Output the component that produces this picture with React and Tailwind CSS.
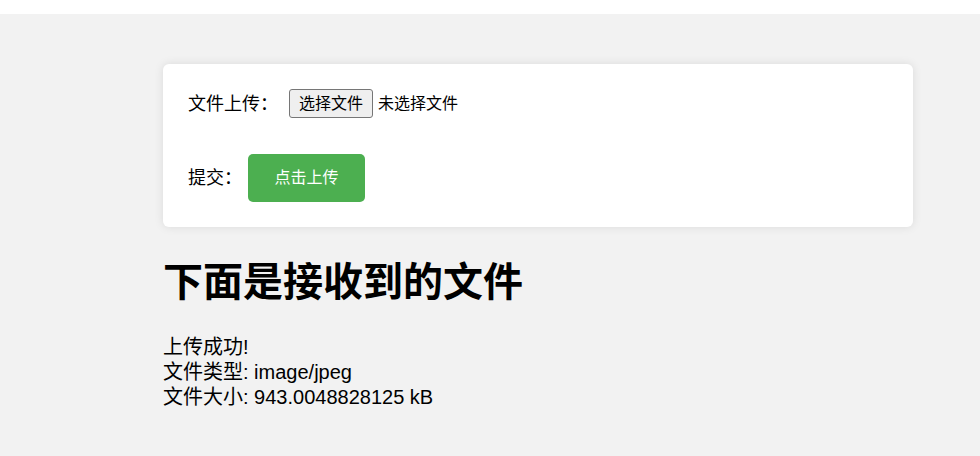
export default function App() {
  return (
    <div
      className="min-h-[456px] bg-[#f2f2f2] text-black"
      style={{ fontFamily: '"Liberation Sans", "Noto Sans CJK SC", sans-serif' }}
    >
      {/* top strip */}
      <div className="h-[14px] bg-white" />

      <div className="ml-[163px] w-[750px] pt-[50px]">
        {/* upload card */}
        <div className="bg-white rounded-[6px] shadow-[0_0_10px_rgba(0,0,0,0.1)] px-[25px] py-[25px]">
          <div className="flex items-center h-[29px]">
            <span className="text-[18px] leading-none">文件上传：</span>
            <button className="ml-[11px] h-[29px] px-[9px] text-[16px] leading-none bg-[#efefef] border border-[#767676] rounded-[3px]">
              选择文件
            </button>
            <span className="ml-[5px] text-[16px] leading-none">未选择文件</span>
          </div>
          <div className="flex items-center mt-[36px] h-[48px]">
            <span className="text-[18px] leading-none">提交：</span>
            <button className="ml-[6px] h-[48px] w-[117px] bg-[#4caf50] text-white text-[16px] rounded-[5px]">
              点击上传
            </button>
          </div>
        </div>

        {/* result */}
        <h1 className="mt-[31px] text-[40px] leading-[48px] font-bold">下面是接收到的文件</h1>
        <div className="mt-[29px] text-[20px] leading-[25px]">
          <div>上传成功!</div>
          <div>文件类型: image/jpeg</div>
          <div>文件大小: 943.0048828125 kB</div>
        </div>
      </div>
    </div>
  );
}
